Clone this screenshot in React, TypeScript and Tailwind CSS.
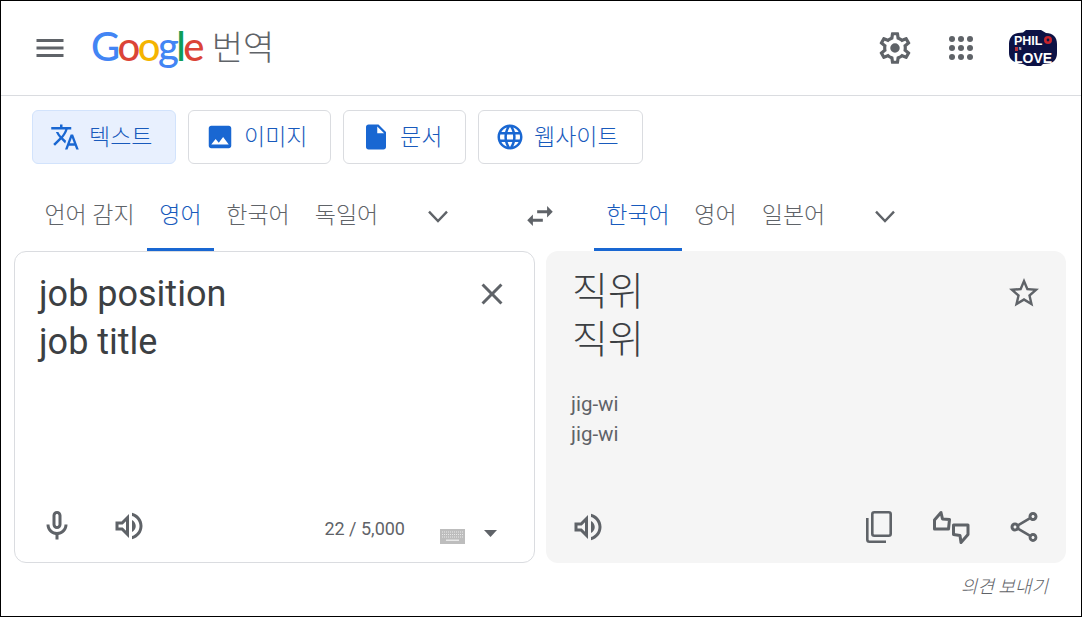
const KR = "font-['Roboto','Noto_Sans_CJK_KR',sans-serif]";

function Icon({ d, className, children }: { d?: string; className: string; children?: React.ReactNode }) {
  return (
    <svg viewBox="0 0 24 24" fill="currentColor" className={className}>
      {d && <path d={d} />}
      {children}
    </svg>
  );
}

const PATHS = {
  menu: 'M3 18h18v-2H3v2zm0-5h18v-2H3v2zm0-7v2h18V6H3z',
  settings:
    'M19.43 12.98c.04-.32.07-.64.07-.98 0-.34-.03-.66-.07-.98l2.11-1.65c.19-.15.24-.42.12-.64l-2-3.46c-.09-.16-.26-.25-.44-.25-.06 0-.12.01-.17.03l-2.49 1c-.52-.4-1.08-.73-1.69-.98l-.38-2.65C14.46 2.18 14.25 2 14 2h-4c-.25 0-.46.18-.49.42l-.38 2.65c-.61.25-1.17.59-1.69.98l-2.49-1c-.06-.02-.12-.03-.18-.03-.17 0-.34.09-.43.25l-2 3.46c-.13.22-.07.49.12.64l2.11 1.65c-.04.32-.07.65-.07.98 0 .33.03.66.07.98l-2.11 1.65c-.19.15-.24.42-.12.64l2 3.46c.09.16.26.25.44.25.06 0 .12-.01.17-.03l2.49-1c.52.4 1.08.73 1.69.98l.38 2.65c.03.24.24.42.49.42h4c.25 0 .46-.18.49-.42l.38-2.65c.61-.25 1.17-.59 1.69-.98l2.49 1c.06.02.12.03.18.03.17 0 .34-.09.43-.25l2-3.46c.12-.22.07-.49-.12-.64l-2.11-1.65zm-1.98-1.71c.04.31.05.52.05.73 0 .21-.02.43-.05.73l-.14 1.13.89.7 1.08.84-.7 1.21-1.27-.51-1.04-.42-.9.68c-.43.32-.84.56-1.25.73l-1.06.43-.16 1.13-.2 1.35h-1.4l-.19-1.35-.16-1.13-1.06-.43c-.43-.18-.83-.41-1.23-.71l-.91-.7-1.06.43-1.27.51-.7-1.21 1.08-.84.89-.7-.14-1.13c-.03-.31-.05-.54-.05-.74s.02-.43.05-.73l.14-1.13-.89-.7-1.08-.84.7-1.21 1.27.51 1.04.42.9-.68c.43-.32.84-.56 1.25-.73l1.06-.43.16-1.13.2-1.35h1.39l.19 1.35.16 1.13 1.06.43c.43.18.83.41 1.23.71l.91.7 1.06-.43 1.27-.51.7 1.21-1.07.85-.89.7.14 1.13zM12 9a3 3 0 1 0 0 6 3 3 0 0 0 0-6z',
  translate:
    'M12.87 15.07l-2.54-2.51.03-.03c1.74-1.94 2.98-4.17 3.71-6.53H17V4h-7V2H8v2H1v1.99h11.17C11.5 7.92 10.44 9.75 9 11.35 8.07 10.32 7.3 9.19 6.69 8h-2c.73 1.63 1.73 3.17 2.98 4.56l-5.09 5.02L4 19l5-5 3.11 3.11.76-2.04zM18.5 10h-2L12 22h2l1.12-3h4.75L21 22h2l-4.5-12zm-2.62 7l1.62-4.33L19.12 17h-3.24z',
  image:
    'M21 19V5c0-1.1-.9-2-2-2H5c-1.1 0-2 .9-2 2v14c0 1.1.9 2 2 2h14c1.1 0 2-.9 2-2zM8.5 13.5l2.5 3.01L14.5 12l4.5 6H5l3.5-4.5z',
  doc: 'M6 2c-1.1 0-1.99.9-1.99 2L4 20c0 1.1.89 2 1.99 2H18c1.1 0 2-.9 2-2V8l-6-6H6zm7 7V3.5L18.5 9H13z',
  globe:
    'M11.99 2C6.47 2 2 6.48 2 12s4.47 10 9.99 10C17.52 22 22 17.52 22 12S17.52 2 11.99 2zm6.93 6h-2.95c-.32-1.25-.78-2.45-1.38-3.56 1.84.63 3.37 1.91 4.33 3.56zM12 4.04c.83 1.2 1.48 2.53 1.91 3.96h-3.82c.43-1.43 1.08-2.76 1.91-3.96zM4.26 14C4.1 13.36 4 12.69 4 12s.1-1.36.26-2h3.38c-.08.66-.14 1.32-.14 2 0 .68.06 1.34.14 2H4.26zm.82 2h2.95c.32 1.25.78 2.45 1.38 3.56-1.84-.63-3.37-1.9-4.33-3.56zm2.95-8H5.08c.96-1.66 2.49-2.93 4.33-3.56C8.81 5.55 8.35 6.75 8.03 8zM12 19.96c-.83-1.2-1.48-2.53-1.91-3.96h3.82c-.43 1.43-1.08 2.76-1.91 3.96zM14.34 14H9.66c-.09-.66-.16-1.32-.16-2 0-.68.07-1.35.16-2h4.68c.09.65.16 1.32.16 2 0 .68-.07 1.34-.16 2zm.25 5.56c.6-1.11 1.06-2.31 1.38-3.56h2.95c-.96 1.65-2.49 2.93-4.33 3.56zM16.36 14c.08-.66.14-1.32.14-2 0-.68-.06-1.34-.14-2h3.38c.16.64.26 1.31.26 2s-.1 1.36-.26 2h-3.38z',
  swap: 'M6.99 11L3 15l3.99 4v-3H14v-2H6.99v-3zM21 9l-4-4v3h-7v2h7v3l4-4z',
  mic: 'M12 14c1.66 0 3-1.34 3-3V5c0-1.66-1.34-3-3-3S9 3.34 9 5v6c0 1.66 1.34 3 3 3zm-1-9c0-.55.45-1 1-1s1 .45 1 1v6c0 .55-.45 1-1 1s-1-.45-1-1V5zm6 6c0 2.76-2.24 5-5 5s-5-2.24-5-5H5c0 3.53 2.61 6.43 6 6.92V21h2v-3.08c3.39-.49 6-3.39 6-6.92h-2z',
  volume:
    'M3 9v6h4l5 5V4L7 9H3zm7-.17v6.34L7.83 13H5v-2h2.83L10 8.83zM16.5 12c0-1.77-1.02-3.29-2.5-4.03v8.05c1.48-.73 2.5-2.25 2.5-4.02zM14 3.23v2.06c2.89.86 5 3.54 5 6.71s-2.11 5.85-5 6.71v2.06c4.01-.91 7-4.49 7-8.77 0-4.28-2.99-7.86-7-8.77z',
  close:
    'M19 6.41L17.59 5 12 10.59 6.41 5 5 6.41 10.59 12 5 17.59 6.41 19 12 13.41 17.59 19 19 17.59 13.41 12z',
  star: 'M22 9.24l-7.19-.62L12 2 9.19 8.63 2 9.24l5.46 4.73L5.82 21 12 17.27 18.18 21l-1.63-7.03L22 9.24zM12 15.4l-3.76 2.27 1-4.28-3.32-2.88 4.38-.38L12 6.1l1.71 4.04 4.38.38-3.32 2.88 1 4.28L12 15.4z',
  share:
    'M18 16.08c-.76 0-1.44.3-1.96.77L8.91 12.7c.05-.23.09-.46.09-.7s-.04-.47-.09-.7l7.05-4.11c.54.5 1.25.81 2.04.81 1.66 0 3-1.34 3-3s-1.34-3-3-3-3 1.34-3 3c0 .24.04.47.09.7L8.04 9.81C7.5 9.31 6.79 9 6 9c-1.66 0-3 1.34-3 3s1.34 3 3 3c.79 0 1.5-.31 2.04-.81l7.12 4.16c-.05.21-.08.43-.08.65 0 1.61 1.31 2.92 2.92 2.92 1.61 0 2.92-1.31 2.92-2.92s-1.31-2.92-2.92-2.92zM18 4c.55 0 1 .45 1 1s-.45 1-1 1-1-.45-1-1 .45-1 1-1zM6 13c-.55 0-1-.45-1-1s.45-1 1-1 1 .45 1 1-.45 1-1 1zm12 7.02c-.55 0-1-.45-1-1s.45-1 1-1 1 .45 1 1-.45 1-1 1z',
};

function Chevron({ className }: { className: string }) {
  return (
    <svg viewBox="0 0 20 13" fill="none" stroke="currentColor" strokeWidth="2.4" className={className}>
      <path d="M1 1.6l9 9.4 9-9.4" />
    </svg>
  );
}

function Logo() {
  return (
    <div className="flex font-['Lato',sans-serif] text-[40px] font-medium leading-none tracking-[-2.6px]">
      <span className="text-[#4285f4]">G</span>
      <span className="text-[#db4437]">o</span>
      <span className="text-[#f4b400]">o</span>
      <span className="text-[#4285f4]">g</span>
      <span className="text-[#0f9d58]">l</span>
      <span className="text-[#db4437]">e</span>
    </div>
  );
}

function Avatar() {
  return (
    <svg viewBox="0 0 48 36" className="h-[36px] w-[48px]">
      <path
        d="M0 14C0 8 3 4 9 3l5-.4L17 0h15l5 3c7 0 11 4 11 11v9c0 6-3 10-9 10.500l-5 .4-2 2H18l-4-2C4 33 0 29 0 23z"
        fill="#0d1245"
      />
      <text x="5" y="14.500" fontFamily="Liberation Sans" fontWeight="700" fontSize="12.5" fill="#fff">
        PHIL
      </text>
      <circle cx="39" cy="10" r="4" fill="#c8242c" />
      <circle cx="39" cy="10" r="1.400" fill="#0d1245" />
      <rect x="6" y="17" width="3" height="4" fill="#b3323a" />
      <text x="10" y="19.800" fontFamily="Liberation Sans" fontWeight="700" fontSize="3" fill="#fff">
        N
      </text>
      <text x="5" y="33" fontFamily="Liberation Sans" fontWeight="700" fontSize="14" fill="#fff">
        LOVE
      </text>
    </svg>
  );
}

function ModeTab({ label, d, active, className }: { label: string; d: string; active?: boolean; className: string }) {
  return (
    <div
      className={`flex h-[54px] items-center rounded-[6px] border ${className} ${
        active ? 'border-[#d2e3fc] bg-[#e8f0fe]' : 'border-[#dadce0] bg-white'
      }`}
    >
      <Icon d={d} className="h-[30px] w-[30px] shrink-0 text-[#1967d2]" />
      <span className="ml-[9px] pt-[3px] text-[23px] font-light text-[#185abc]">{label}</span>
    </div>
  );
}

function LangTab({ label, active, className }: { label: string; active?: boolean; className: string }) {
  return (
    <div
      className={`flex h-[70px] items-center justify-center whitespace-nowrap border-b-[3px] pt-[4px] text-[23px] font-light ${className} ${
        active ? 'border-[#1967d2] text-[#185abc]' : 'border-transparent text-[#5f6368]'
      }`}
    >
      {label}
    </div>
  );
}

export default function App() {
  return (
    <div className={`flex h-[617px] w-[1082px] flex-col overflow-hidden border border-black bg-white ${KR}`}>
      {/* top bar */}
      <header className="flex h-[95px] shrink-0 items-center border-b border-[#dadce0] pl-[31px] pr-[24px]">
        <Icon d={PATHS.menu} className="h-[36px] w-[36px] text-[#5f6368]" />
        <div className="ml-[23px] mt-[-4px]">
          <Logo />
        </div>
        <span className="ml-[10px] text-[34px] font-light leading-none text-[#5f6368]">번역</span>
        <div className="ml-auto flex items-center">
          <Icon d={PATHS.settings} className="h-[38px] w-[38px] text-[#5f6368]" />
          <Icon className="ml-[29px] h-[36px] w-[36px] text-[#5f6368]">
            <circle cx="6" cy="6" r="2" />
            <circle cx="12" cy="6" r="2" />
            <circle cx="18" cy="6" r="2" />
            <circle cx="6" cy="12" r="2" />
            <circle cx="12" cy="12" r="2" />
            <circle cx="18" cy="12" r="2" />
            <circle cx="6" cy="18" r="2" />
            <circle cx="12" cy="18" r="2" />
            <circle cx="18" cy="18" r="2" />
          </Icon>
          <div className="ml-[30px]">
            <Avatar />
          </div>
        </div>
      </header>

      {/* text / image / doc / site */}
      <div className="mt-[14px] flex gap-[12px] pl-[31px]">
        <ModeTab label="텍스트" d={PATHS.translate} active className="w-[144px] pl-[17px]" />
        <ModeTab label="이미지" d={PATHS.image} className="w-[143px] pl-[16px]" />
        <ModeTab label="문서" d={PATHS.doc} className="w-[123px] pl-[17px]" />
        <ModeTab label="웹사이트" d={PATHS.globe} className="w-[165px] pl-[16px]" />
      </div>

      {/* language row */}
      <div className="mt-[17px] flex h-[70px] shrink-0 items-center">
        <div className="ml-[31px] flex w-[447px] items-center">
          <LangTab label="언어 감지" className="w-[115px]" />
          <LangTab label="영어" active className="w-[67px]" />
          <LangTab label="한국어" className="w-[88px]" />
          <LangTab label="독일어" className="w-[89px]" />
          <Chevron className="ml-[37px] h-[13px] w-[20px] text-[#5f6368]" />
        </div>
        <Icon d={PATHS.swap} className="ml-[44px] h-[34px] w-[34px] text-[#5f6368]" />
        <div className="ml-[37px] flex items-center">
          <LangTab label="한국어" active className="w-[88px]" />
          <LangTab label="영어" className="w-[67px]" />
          <LangTab label="일본어" className="w-[89px]" />
          <Chevron className="ml-[37px] h-[13px] w-[20px] text-[#5f6368]" />
        </div>
      </div>

      {/* panels */}
      <div className="flex gap-[11px] pl-[13px]">
        <section className="flex h-[312px] w-[521px] flex-col justify-between rounded-[12px] border border-[#dadce0] pb-[18px] pl-[24px] pr-[24px] pt-[18px]">
          <div className="flex justify-between">
            <div className="text-[36px] leading-[48px] text-[#3c4043]">
              job position
              <br />
              job title
            </div>
            <Icon d={PATHS.close} className="mt-[6px] h-[36px] w-[36px] text-[#5f6368]" />
          </div>
          <div className="flex items-center text-[#5f6368]">
            <Icon d={PATHS.mic} className="h-[36px] w-[36px]" />
            <Icon d={PATHS.volume} className="ml-[36px] h-[36px] w-[36px]" />
            <span className="ml-auto mt-[4px] text-[18px]">22 / 5,000</span>
            <svg viewBox="0 0 25 15" className="ml-[35px] mt-[20px] h-[15px] w-[25px]">
              <rect width="25" height="15" fill="#bdbdbd" />
              <path d="M2 3h21M2 5.500h21M2 8h21" stroke="#e8e8e8" strokeDasharray="1 1" />
              <rect x="6" y="10.500" width="13" height="1.500" fill="#e8e8e8" />
            </svg>
            <svg viewBox="0 0 13 7" className="ml-[19px] mr-[13px] mt-[14px] h-[7px] w-[13px]">
              <path d="M0 0h13l-6.500 7z" fill="#5f6368" />
            </svg>
          </div>
        </section>

        <section className="flex h-[312px] w-[520px] flex-col rounded-[12px] bg-[#f5f5f5] pb-[18px] pl-[26px] pr-[24px] pt-[17px]">
          <div className="flex justify-between">
            <div className="text-[39px] font-light leading-[48px] text-[#3c4043]">
              직위
              <br />
              직위
            </div>
            <Icon d={PATHS.star} className="mt-[7px] h-[36px] w-[36px] text-[#5f6368]" />
          </div>
          <div className="ml-[-1px] mt-[25px] text-[20.5px] leading-[30px] text-[#5f6368]">
            jig-wi
            <br />
            jig-wi
          </div>
          <div className="mt-auto flex items-center text-[#5f6368]">
            <Icon d={PATHS.volume} className="ml-[-2px] h-[36px] w-[36px]" />
            <svg viewBox="0 0 26 32" fill="none" stroke="currentColor" strokeWidth="2.600" className="ml-auto h-[32px] w-[26px]">
              <rect x="6.300" y="1.300" width="18.400" height="23.400" rx="2" />
              <path d="M1.300 7v21.500c0 1.200 1 2.200 2.200 2.200H20" />
            </svg>
            <svg viewBox="0 0 38 36" fill="none" stroke="currentColor" strokeWidth="3" strokeLinejoin="round" className="ml-[40px] h-[36px] w-[38px]">
              <path d="M2.500 20v-9l6.500-7.500 1.500 6.500 7 .5-1 9.500z" />
              <path d="M21.500 16h14.500v9.500l-7 8-1-7-6.500-1z" />
            </svg>
            <Icon d={PATHS.share} className="ml-[36px] h-[36px] w-[36px]" />
          </div>
        </section>
      </div>

      <div className="mt-[13px] pr-[33px] text-right text-[18px] font-light italic leading-[22px] text-[#5f6368]">의견 보내기</div>
    </div>
  );
}
